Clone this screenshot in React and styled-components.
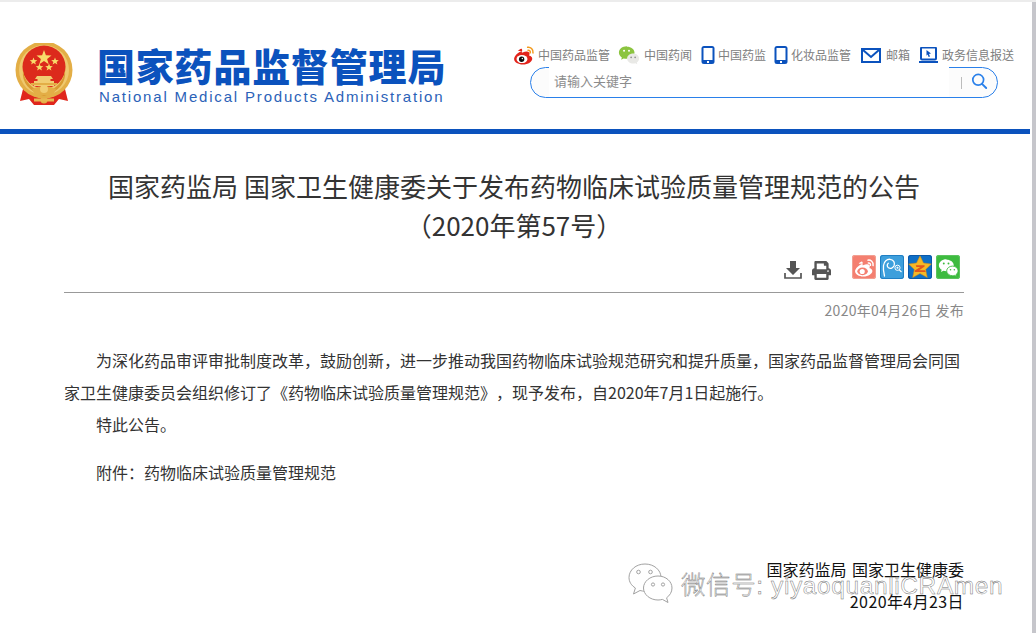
import React from 'react';
import styled, { createGlobalStyle } from 'styled-components';
import { FaPrint } from 'react-icons/fa';

const cjk = `'Noto Sans CJK SC', 'Noto Sans', sans-serif`;

const GlobalStyle = createGlobalStyle`
  html, body {
    margin: 0;
    padding: 0;
    background: #fff;
    overflow: hidden;
  }
`;

const Page = styled.div`
  position: relative;
  width: 1036px;
  height: 633px;
  overflow: hidden;
  font-family: ${cjk};
  text-spacing-trim: space-all;
  border-top: 2px solid #ececec;
  box-sizing: border-box;
  display: flex;
`;
const Main = styled.div`
  width: 1030px;
`;
const ScrollTrack = styled.div`
  width: 4px;
  margin-left: 2px;
  background: #c6c6cb;
`;

const Header = styled.header`
  height: 127px;
  display: flex;
  border-bottom: 5px solid #0b52bd;
`;
const Brand = styled.div`
  display: flex;
  padding: 41px 0 0 15px;
  width: 499px;
  box-sizing: border-box;
`;
const BrandText = styled.div`
  margin-left: 24px;
  padding-top: 2px;
`;
const BrandName = styled.div`
  font-size: 38px;
  line-height: 40px;
  font-weight: 900;
  color: #0b52bd;
  letter-spacing: 0.8px;
  white-space: nowrap;
`;
const BrandEn = styled.div`
  font-family: 'Liberation Sans', sans-serif;
  font-size: 15px;
  line-height: 17px;
  color: #2b62b8;
  letter-spacing: 1.82px;
  margin: 3px 0 0 2px;
  white-space: nowrap;
`;

const HeaderRight = styled.div`
  padding: 42px 0 0 14px;
`;
const TopLinks = styled.nav`
  display: flex;
  align-items: center;
  height: 22px;
`;
const TopLink = styled.a`
  display: flex;
  align-items: center;
  gap: ${p => p.$gap || 3}px;
  margin-right: ${p => p.$after || 8}px;
  font-size: 12px;
  line-height: 22px;
  color: #808080;
  white-space: nowrap;
`;
const SearchBox = styled.div`
  width: 468px;
  height: 31px;
  margin: 1px 0 0 17px;
  box-sizing: border-box;
  border: 1px solid #2a80ea;
  border-radius: 16px;
  display: flex;
  align-items: stretch;
  padding-left: 18px;
  background: #fcfcfc;
`;
const SearchInput = styled.div`
  width: 400px;
  height: 30px;
  margin-top: -1px;
  box-sizing: border-box;
  padding-left: 5px;
  background: #fff;
  font-size: 13px;
  line-height: 28px;
  color: #8c8c8c;
`;
const SearchDivider = styled.span`
  width: 1px;
  height: 12px;
  margin: 9px 0 0 12px;
  background: #bcbcbc;
`;
const SearchBtn = styled.span`
  margin: 3px 0 0 9px;
  width: 17px;
  height: 17px;
`;

const Article = styled.article`
  width: 900px;
  margin-left: 64px;
`;
const Title = styled.h1`
  margin: 31px 0 0;
  font-size: 26px;
  line-height: 39px;
  font-weight: 400;
  color: #333;
  text-align: center;
  padding-top: 1px;
`;
const ToolRow = styled.div`
  display: flex;
  align-items: flex-start;
  justify-content: flex-end;
  height: 37px;
  margin-top: 11px;
  padding-right: 4px;
  border-bottom: 1px solid #999;
`;
const PlainTool = styled.span`
  display: flex;
  margin: 6px ${p => p.$after}px 0 0;
  color: #555;
`;
const Social = styled.span`
  display: flex;
  align-items: center;
  justify-content: center;
  width: 24px;
  height: 24px;
  margin-left: 4px;
  border-radius: 3px;
  background: ${p => p.$bg};
  box-shadow: inset 0 0 0 1px ${p => p.$edge};
  overflow: hidden;
`;
const DateLine = styled.div`
  margin-top: 7px;
  font-size: 14px;
  line-height: 20px;
  color: #888;
  letter-spacing: 0.3px;
  text-align: right;
`;
const Body = styled.div`
  margin-top: 24px;
  font-size: 16px;
  line-height: 32px;
  color: #333;
`;
const Para = styled.p`
  margin: 0 0 ${p => p.$after || 0}px;
  text-indent: 32px;
`;
const Sign = styled.div`
  margin-top: 65px;
  font-size: 16px;
  line-height: 32px;
  color: #111;
  text-align: right;
  word-spacing: 2px;
`;
const SignDate = styled.span`
  letter-spacing: 0.4px;
`;

const Watermark = styled.div`
  position: absolute;
  left: 628px;
  top: 561px;
  display: flex;
  align-items: center;
  gap: 8px;
  white-space: nowrap;
  pointer-events: none;
`;
const WatermarkText = styled.span`
  font-family: 'Liberation Sans', ${cjk};
  font-size: 24.5px;
  font-weight: 300;
  letter-spacing: 0.6px;
  color: rgba(255, 255, 255, 0.6);
  -webkit-text-stroke: 0.45px #6e6e6e;
`;

const Emblem = () => (
  <svg width="58" height="63" viewBox="0 0 58 63">
    <path d="M8 46 L5 58 L14 56 L19 62 L39 62 L44 56 L53 58 L50 46 Z" fill="#e0261c" />
    <circle cx="29" cy="27" r="28.5" fill="#e3ae46" />
    <circle cx="29" cy="27" r="25" fill="#efc96f" />
    <circle cx="29" cy="24" r="21.5" fill="#dc2a1c" />
    <path d="M8 27 Q10 44 29 50 Q48 44 50 27 Q52 46 29 53 Q6 46 8 27Z" fill="#d99a32" />
    <path d="M29 7 l1.9 5.3 5.6 .2 -4.4 3.4 1.6 5.4 -4.7 -3.2 -4.7 3.2 1.6 -5.4 -4.4 -3.4 5.6 -.2z" fill="#f8dc6a" />
    <path d="M18.5 14.5 l1 2.6 2.8 .1 -2.2 1.7 .8 2.7 -2.4 -1.6 -2.4 1.6 .8 -2.7 -2.2 -1.7 2.8 -.1z" fill="#f8dc6a" />
    <path d="M40 14.5 l1 2.6 2.8 .1 -2.2 1.7 .8 2.7 -2.4 -1.6 -2.4 1.6 .8 -2.7 -2.2 -1.7 2.8 -.1z" fill="#f8dc6a" />
    <path d="M24.5 20.5 l1 2.6 2.8 .1 -2.2 1.7 .8 2.7 -2.4 -1.6 -2.4 1.6 .8 -2.7 -2.2 -1.7 2.8 -.1z" fill="#f8dc6a" />
    <path d="M34 20.5 l1 2.6 2.8 .1 -2.2 1.7 .8 2.7 -2.4 -1.6 -2.4 1.6 .8 -2.7 -2.2 -1.7 2.8 -.1z" fill="#f8dc6a" />
    <path d="M22 33 H36 L38 36 H35.5 V38 H39 V43 H19 V38 H22.5 V36 H20 Z" fill="#f1cd72" />
    <rect x="16" y="40" width="26" height="2" fill="#e3ae46" />
    <path d="M17 46 Q29 40 41 46 L38 52 H20 Z" fill="#e3ae46" />
    <circle cx="29" cy="46" r="4" fill="#f1cd72" />
    <circle cx="29" cy="57" r="3.5" fill="#e3ae46" />
    <rect x="19" y="55.5" width="20" height="3" fill="#e8b752" />
  </svg>
);

const WeiboIcon = ({ size = 22, mono }) => (
  <svg width={size} height={size} viewBox="0 0 24 24">
    <path d="M10 7.6C5.6 9 1.2 13 1.2 16.4c0 3.500 4.600 6 9.400 6 6.200 0 10.400-3.600 10.400-6.400 0-1.800-1.600-2.700-2.900-3.100-.4-.1-.6-.2-.4-.7.5-1.200.5-2.300 0-2.900-1.100-1.400-4-1.300-7.300 0 0 0-1 .5-.7-.4.5-1.600.4-2.900-.3-3.600-.8-.7-2.500.6-4.100 2.300z" fill={mono ? '#fff' : '#e2231a'} />
    <ellipse cx="9.800" cy="16.400" rx="6" ry="4.400" fill={mono ? '#f47f70' : '#fff'} />
    <circle cx="9.400" cy="16.600" r="2.900" fill={mono ? '#fff' : '#111'} />
    {!mono && <circle cx="10.200" cy="15.800" r=".8" fill="#fff" />}
    <path d="M16 3.600c3-.5 6.400 2 5.800 6.200M16.400 6.800c1.500-.2 2.800 1 2.400 2.700" fill="none" stroke={mono ? '#fff' : '#f39a1d'} strokeWidth="1.700" strokeLinecap="round" />
  </svg>
);

const WechatPair = ({ width = 22, height = 22, back = '#8bc43f', front = '#e9e9e6', eye = '#fff', eye2 = '#8a8a8a', outline = 'none' }) => (
  <svg width={width} height={height} viewBox="0 0 24 24">
    <path d="M9.500 2.500C4.800 2.500 1 5.600 1 9.400c0 2.200 1.200 4 3.200 5.300l-.8 2.500 2.800-1.500c1.100.3 2.100.5 3.300.5 4.700 0 8.500-3.100 8.500-6.800s-3.800-6.400-8-6.400z" fill={back} />
    <circle cx="6.600" cy="7.400" r="1.100" fill={eye} />
    <circle cx="12" cy="7.400" r="1.100" fill={eye} />
    <path d="M16.600 10.400c-3.700 0-6.700 2.500-6.700 5.500s3 5.500 6.700 5.500c.8 0 1.600-.1 2.300-.4l2.200 1.200-.6-2c1.500-1 2.500-2.600 2.500-4.300 0-3-2.800-5.500-6.400-5.500z" fill={front} stroke={outline} strokeWidth="1" />
    <circle cx="14.300" cy="14.600" r=".9" fill={eye2} />
    <circle cx="18.700" cy="14.600" r=".9" fill={eye2} />
  </svg>
);

const PhoneIcon = () => (
  <svg width="14" height="18" viewBox="0 0 14 18">
    <rect x="0.500" y="0" width="13" height="18" rx="2.500" fill="#0b52bd" />
    <rect x="2.500" y="2" width="9" height="12" fill="#fff" />
    <rect x="6" y="15" width="2" height="2" fill="#fff" />
  </svg>
);

const MailIcon = () => (
  <svg width="20" height="15" viewBox="0 0 20 15">
    <rect x="1" y="1" width="18" height="13" fill="none" stroke="#0b52bd" strokeWidth="2" />
    <path d="M2 2 L10 9 L18 2" fill="none" stroke="#0b52bd" strokeWidth="2" />
  </svg>
);

const ScreenIcon = () => (
  <svg width="19" height="17" viewBox="0 0 19 17">
    <rect x="2" y="0.500" width="15" height="12" rx="1" fill="none" stroke="#0b52bd" strokeWidth="2" />
    <path d="M0 14 H19 V16 H0Z" fill="#0b52bd" />
    <path d="M7.500 3 L12 6.500 L10 7 L11 9.500 L9.600 10 L8.700 7.600 L7.500 8.800 Z" fill="#0b52bd" />
  </svg>
);

const SearchIcon = () => (
  <svg width="17" height="17" viewBox="0 0 17 17">
    <circle cx="7.200" cy="6.800" r="5.400" fill="none" stroke="#2a80ea" strokeWidth="1.700" />
    <path d="M11 10.800 L15.200 15" stroke="#2a80ea" strokeWidth="1.900" strokeLinecap="round" />
  </svg>
);

const DownloadIcon = () => (
  <svg width="18" height="18" viewBox="0 0 18 18">
    <path d="M6 0 H12 V7 H16 L9 14 L2 7 H6 Z" fill="#555" />
    <path d="M1 12 V17 H17 V12" fill="none" stroke="#555" strokeWidth="1.700" />
  </svg>
);

const QzoneIcon = () => (
  <svg width="24" height="24" viewBox="0 0 24 24">
    <path d="M12 .8 L15.500 8 L23.400 9 L17.700 14.500 L19.300 22.600 L12 18.600 L4.700 22.600 L6.300 14.500 L.6 9 L8.500 8 Z" fill="#f6b826" stroke="#cf8a1a" strokeWidth=".5" />
    <path d="M7.800 10.200 H16.600 V11.600 L11.200 15.200 H16.800 L17.800 17 H6.800 V15.500 L12.400 12 H8.400 Z" fill="#e2541c" />
  </svg>
);

const PengyouIcon = () => (
  <svg width="24" height="24" viewBox="0 0 24 24" fill="none" stroke="#fff">
    <path d="M4.500 21 C3.500 17 3 14 3.500 10.500 C4 6.500 7 4 10 4.300 C13.500 4.700 15 7.500 14.200 10.400 C13.400 13 10.500 14 8.500 12.800 C6.800 11.700 6.900 9.300 8.300 8.300" strokeWidth="1.300" strokeLinecap="round" />
    <circle cx="17.500" cy="12.800" r="2.600" strokeWidth="1" />
    <circle cx="17.500" cy="12.800" r=".8" fill="#fff" strokeWidth=".5" />
    <path d="M19.300 14.800 L21.500 17" strokeWidth="1.100" />
  </svg>
);

const WatermarkLogo = () => (
  <svg width="45" height="40" viewBox="0 0 45 40" fill="#fff" stroke="#a2a2a2" strokeWidth="1">
    <path d="M17 1C8 1 1 7 1 14.500c0 4.400 2.400 8 6.400 10.500L5.500 31l6.500-3.500c1.700.5 3.300.7 5 .7C26 28.200 33 22 33 14.500S26 1 17 1z" />
    <circle cx="10.500" cy="9" r="1.800" />
    <circle cx="22.500" cy="9" r="1.800" />
    <path d="M30 13c-8 0-14.500 5.500-14.500 12S22 37 30 37c1.500 0 3-.2 4.400-.6L40 39.500l-1.400-4.700C41.800 32.500 44 29 44 25c0-6.500-6-12-14-12z" />
    <circle cx="25" cy="21.500" r="1.600" />
    <circle cx="35" cy="21.500" r="1.600" />
  </svg>
);

const App = () => (
  <Page>
    <GlobalStyle />
    <Main>
      <Header>
        <Brand>
          <Emblem />
          <BrandText>
            <BrandName>国家药品监督管理局</BrandName>
            <BrandEn>National Medical Products Administration</BrandEn>
          </BrandText>
        </Brand>
        <HeaderRight>
          <TopLinks>
            <TopLink $after={8}><WeiboIcon />中国药品监管</TopLink>
            <TopLink $gap={4} $after={9}><WechatPair />中国药闻</TopLink>
            <TopLink $after={8}><PhoneIcon />中国药监</TopLink>
            <TopLink $after={10}><PhoneIcon />化妆品监管</TopLink>
            <TopLink $gap={5} $after={9}><MailIcon />邮箱</TopLink>
            <TopLink $gap={4} $after={0}><ScreenIcon />政务信息报送</TopLink>
          </TopLinks>
          <SearchBox>
            <SearchInput>请输入关键字</SearchInput>
            <SearchDivider />
            <SearchBtn><SearchIcon /></SearchBtn>
          </SearchBox>
        </HeaderRight>
      </Header>
      <Article>
        <Title>
          国家药监局 国家卫生健康委关于发布药物临床试验质量管理规范的公告
          <br />
          （2020年第57号）
        </Title>
        <ToolRow>
          <PlainTool $after={10}><DownloadIcon /></PlainTool>
          <PlainTool $after={17}><FaPrint size={19} /></PlainTool>
          <Social $bg="#f47f70" $edge="#f2a092"><WeiboIcon size={21} mono /></Social>
          <Social $bg="#3d9fdc" $edge="#1f7fc4"><PengyouIcon /></Social>
          <Social $bg="#0f6fc6" $edge="#0a58a8"><QzoneIcon /></Social>
          <Social $bg="#3dbb3f" $edge="#5cc45e"><WechatPair width={21} height={21} back="#fff" front="#fff" eye="#3dbb3f" eye2="#3dbb3f" outline="#3dbb3f" /></Social>
        </ToolRow>
        <DateLine>2020年04月26日 发布</DateLine>
        <Body>
          <Para>
            为深化药品审评审批制度改革，鼓励创新，进一步推动我国药物临床试验规范研究和提升质量，国家药品监督管理局会同国家卫生健康委员会组织修订了《药物临床试验质量管理规范》，现予发布，自2020年7月1日起施行。
          </Para>
          <Para $after={16}>特此公告。</Para>
          <Para>附件：药物临床试验质量管理规范</Para>
        </Body>
        <Sign>
          国家药监局 国家卫生健康委
          <br />
          <SignDate>2020年4月23日</SignDate>
        </Sign>
      </Article>
    </Main>
    <ScrollTrack />
    <Watermark>
      <WatermarkLogo />
      <WatermarkText>微信号: yiyaoquanliCRAmen</WatermarkText>
    </Watermark>
  </Page>
);

export default App;
